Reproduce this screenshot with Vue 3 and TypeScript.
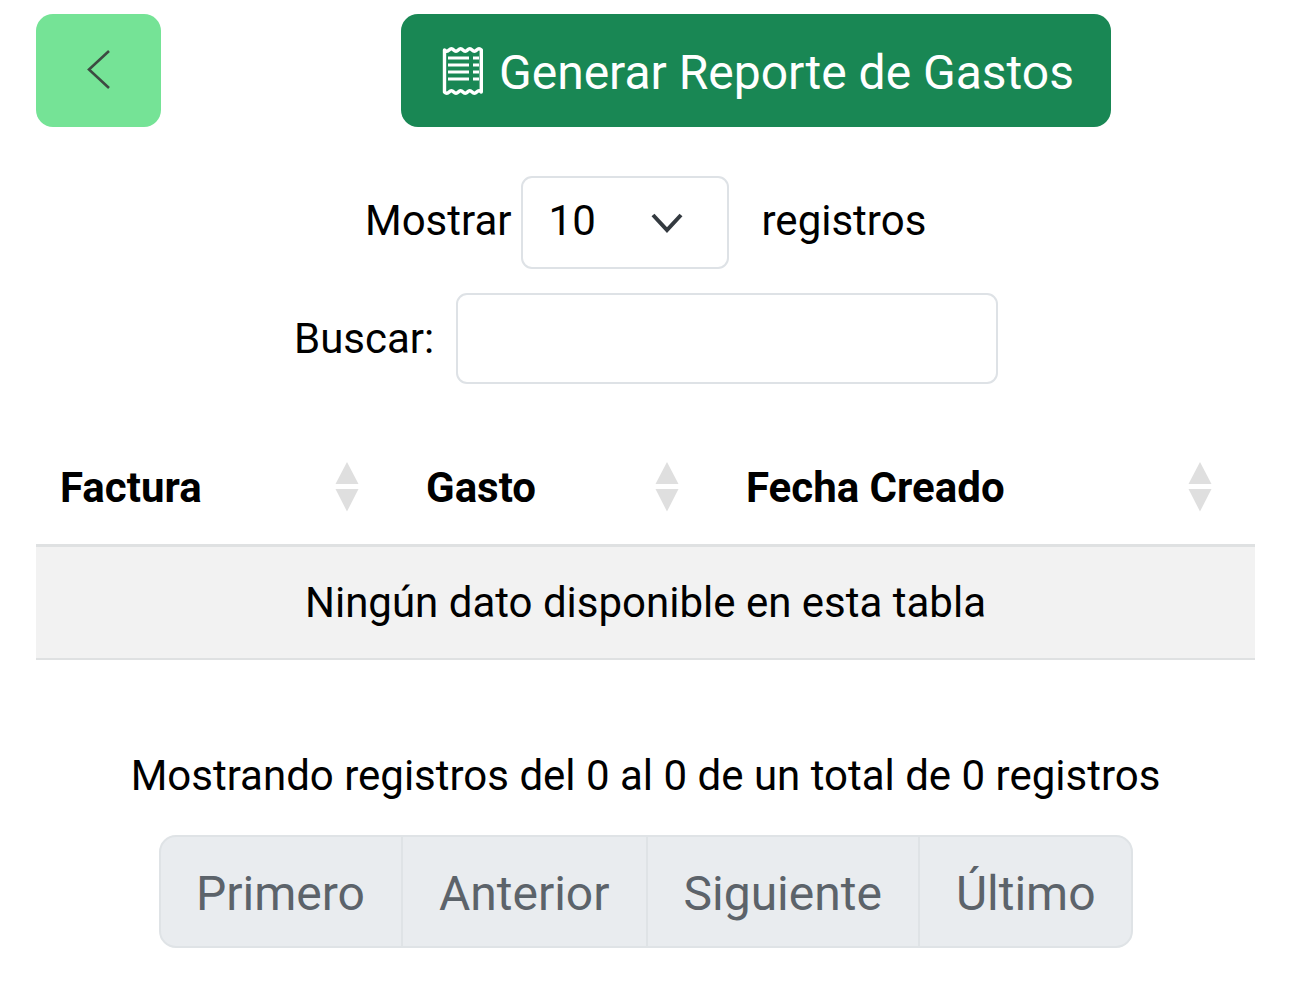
<template>
  <div class="page">
    <div class="actions">
      <button class="back-btn" type="button" aria-label="Volver">
        <svg width="26" height="40" viewBox="0 0 26 40" fill="none">
          <path d="M23 2 L3 20.5 L23 39" stroke="#3d4a42" stroke-width="2.6" />
        </svg>
      </button>
      <button class="report-btn" type="button">
        <svg class="report-icon" width="44" height="48" viewBox="0 0 44 48" fill="none">
          <path
            d="M3.5 3 q2.3 2.4 4.6 0 t4.6 0 t4.6 0 t4.6 0 t4.6 0 t4.6 0 t4.6 0 t4.6 0 V45 q-2.3 -2.4 -4.6 0 t-4.6 0 t-4.6 0 t-4.6 0 t-4.6 0 t-4.6 0 t-4.6 0 t-4.6 0 Z"
            stroke="#fff"
            stroke-width="3.4"
            stroke-linejoin="round"
          />
          <path
            d="M7 11 H28 M7 18 H28 M7 25 H28 M7 32 H28 M32 11 H38 M32 18 H38 M32 25 H38 M32 32 H38"
            stroke="#fff"
            stroke-width="3"
          />
        </svg>
        <span class="report-label">Generar Reporte de Gastos</span>
      </button>
    </div>

    <div class="length-row">
      <label class="length-label">Mostrar</label>
      <div class="select-box">
        <span class="select-value">10</span>
        <svg width="32" height="22" viewBox="0 0 32 22" fill="none">
          <path d="M2 3 L16 18 L30 3" stroke="#343a40" stroke-width="4" />
        </svg>
      </div>
      <span class="length-suffix">registros</span>
    </div>

    <div class="search-row">
      <label class="search-label">Buscar:</label>
      <input class="search-input" type="search" />
    </div>

    <table class="data-table">
      <colgroup>
        <col v-for="col in columns" :key="col.label" :style="{ width: col.width + 'px' }" />
      </colgroup>
      <thead>
        <tr>
          <th v-for="col in columns" :key="col.label">
            <div class="th-inner">
              <span>{{ col.label }}</span>
              <svg class="sort-icon" width="24" height="50" viewBox="0 0 24 50">
                <path d="M12 0 L23.5 22 H0.5 Z M0.5 27 H23.5 L12 49.5 Z" fill="#dfdfdf" />
              </svg>
            </div>
          </th>
        </tr>
      </thead>
      <tbody>
        <tr>
          <td colspan="3">Ningún dato disponible en esta tabla</td>
        </tr>
      </tbody>
    </table>

    <p class="info">Mostrando registros del 0 al 0 de un total de 0 registros</p>

    <div class="pagination">
      <span v-for="page in pages" :key="page" class="page-item">{{ page }}</span>
    </div>
  </div>
</template>

<script setup lang="ts">
interface Column {
  label: string
  width: number
}

const columns: Column[] = [
  { label: 'Factura', width: 366 },
  { label: 'Gasto', width: 320 },
  { label: 'Fecha Creado', width: 533 }
]

const pages = ['Primero', 'Anterior', 'Siguiente', 'Último']
</script>

<style>
html,
body {
  background: #fff;
}
</style>

<style scoped>
.page {
  box-sizing: border-box;
  width: 1290px;
  height: 1001px;
  padding: 14px 35px 0 36px;
  font-family: Roboto, sans-serif;
  font-size: 42px;
  color: #000;
  overflow: hidden;
}

.actions {
  display: flex;
  gap: 240px;
}

.back-btn {
  display: flex;
  align-items: center;
  justify-content: center;
  width: 125px;
  height: 113px;
  padding: 0 0 3px;
  background: #75e396;
  border: 0;
  border-radius: 17px;
}

.report-btn {
  display: flex;
  align-items: center;
  gap: 14px;
  width: 710px;
  height: 113px;
  padding: 0 0 0 40px;
  background: #198754;
  border: 0;
  border-radius: 17px;
  color: #fff;
  font-family: inherit;
  font-size: 48px;
}

.report-icon {
  flex: none;
}

.report-label {
  margin-top: 4px;
}

.length-row {
  display: flex;
  align-items: center;
  height: 93px;
  margin-top: 49px;
  padding-left: 329px;
}

.length-label {
  margin: 0 9px 4px 0;
}

.select-box {
  box-sizing: border-box;
  display: flex;
  align-items: center;
  justify-content: space-between;
  width: 208px;
  height: 93px;
  padding: 0 44px 0 26px;
  border: 2px solid #dee2e6;
  border-radius: 11px;
}

.select-value {
  margin-bottom: 4px;
}

.length-suffix {
  margin: 0 0 4px 33px;
}

.search-row {
  display: flex;
  align-items: center;
  height: 91px;
  margin-top: 24px;
  padding-left: 258px;
}

.search-label {
  margin-right: 22px;
}

.search-input {
  box-sizing: border-box;
  width: 542px;
  height: 91px;
  border: 2px solid #dee2e6;
  border-radius: 11px;
  outline: none;
}

.data-table {
  width: 1219px;
  margin-top: 54px;
  border-collapse: collapse;
  table-layout: fixed;
}

.data-table th {
  height: 99px;
  padding: 0 43px 7px 24px;
  border-bottom: 3px solid #dfe1e2;
  text-align: left;
  font-weight: 700;
}

.th-inner {
  display: flex;
  align-items: center;
  justify-content: space-between;
}

.sort-icon {
  flex: none;
  margin-bottom: 2px;
}

.data-table td {
  height: 110px;
  padding: 0 0 1px;
  background: #f2f2f2;
  border-bottom: 2px solid #dfe1e2;
  text-align: center;
}

.info {
  margin: 88px 0 0;
  line-height: 56px;
  text-align: center;
}

.pagination {
  box-sizing: border-box;
  display: flex;
  width: 974px;
  height: 113px;
  margin: 31px 0 0 123px;
  background: #e9ecef;
  border: 2px solid #dfe3e6;
  border-radius: 17px;
  color: #5c636a;
  font-size: 48px;
}

.page-item {
  display: flex;
  align-items: center;
  padding: 4px 36px 0;
  border-left: 2px solid #dfe3e6;
}

.page-item:first-child {
  padding-left: 35px;
  border-left: 0;
}
</style>
